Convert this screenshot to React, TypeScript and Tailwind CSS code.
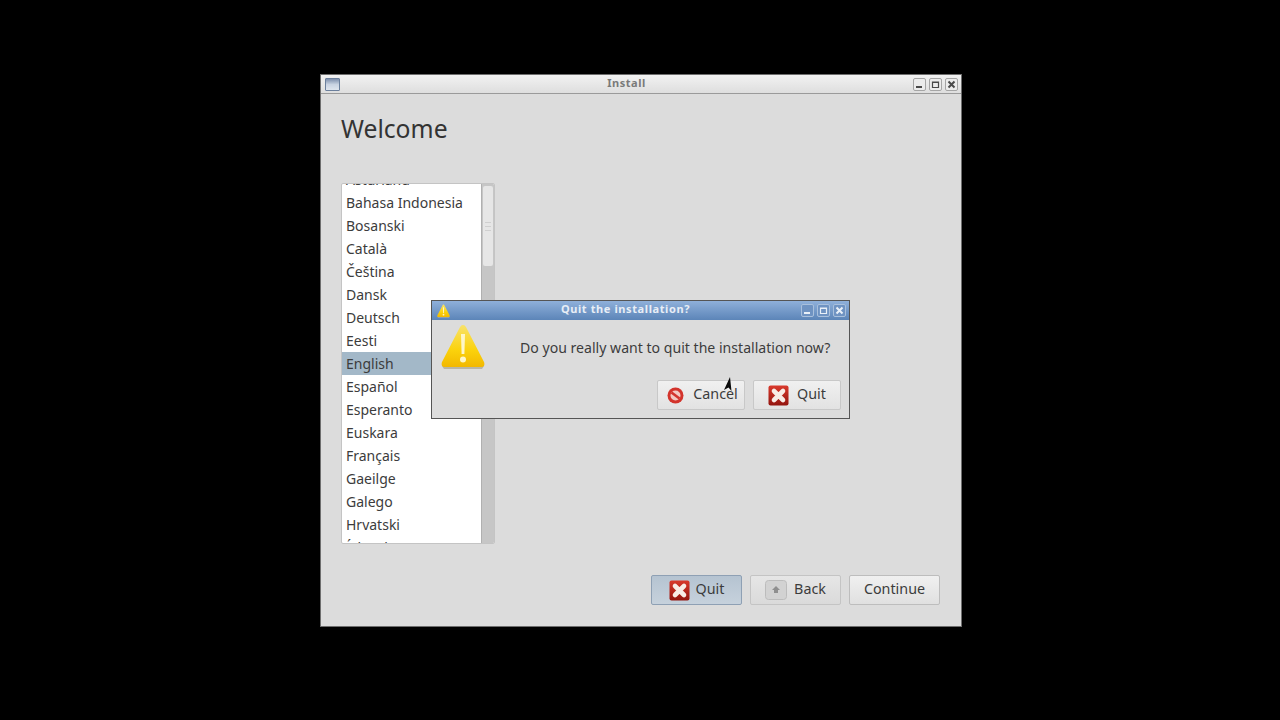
const languages = [
  'Asturianu',
  'Bahasa Indonesia',
  'Bosanski',
  'Català',
  'Čeština',
  'Dansk',
  'Deutsch',
  'Eesti',
  'English',
  'Español',
  'Esperanto',
  'Euskara',
  'Français',
  'Gaeilge',
  'Galego',
  'Hrvatski',
  'Íslenska',
];

function WarningIcon({ size }: { size: number }) {
  return (
    <svg width={size} height={Math.round((size * 46) / 44)} viewBox="0 0 44 46">
      <defs>
        <linearGradient id={`warn${size}`} x1="0" y1="0" x2="0" y2="1">
          <stop offset="0" stopColor="#f8e26a" />
          <stop offset="0.6" stopColor="#fbd20c" />
          <stop offset="1" stopColor="#f2b800" />
        </linearGradient>
      </defs>
      <path d="M3 45 L41 45 L43 42 L1 42 Z" fill="#b9b6a4" />
      <path d="M22 1 C24 1 25 3 26 5 L43 38 C44 41 43 43 40 43 L4 43 C1 43 0 41 1 38 L18 5 C19 3 20 1 22 1 Z" fill={`url(#warn${size})`} />
      <path d="M20 10 L24 10 L23.4 30 L20.6 30 Z" fill="#fdf6c8" />
      <circle cx="22" cy="35.5" r="3" fill="#fdf6c8" />
    </svg>
  );
}

function QuitIcon({ id }: { id: string }) {
  return (
    <svg width="21" height="21" viewBox="0 0 21 21">
      <defs>
        <linearGradient id={id} x1="0" y1="0" x2="0" y2="1">
          <stop offset="0" stopColor="#d9392c" />
          <stop offset="1" stopColor="#93150f" />
        </linearGradient>
      </defs>
      <rect x="0.5" y="0.5" width="20" height="20" rx="2" fill={`url(#${id})`} />
      <path d="M6 6 L15 15 M15 6 L6 15" stroke="#f8ece6" strokeWidth="4.6" strokeLinecap="round" />
    </svg>
  );
}

function CancelIcon() {
  return (
    <svg width="17" height="17" viewBox="0 0 17 17">
      <circle cx="8.5" cy="8.5" r="8" fill="#d3342c" />
      <circle cx="8.5" cy="8.5" r="5" fill="#f2c9c2" />
      <path d="M4.5 5.5 L12.5 11.5" stroke="#d3342c" strokeWidth="2.6" />
    </svg>
  );
}

function BackIcon() {
  return (
    <svg width="22" height="20" viewBox="0 0 22 20">
      <rect x="0.5" y="0.5" width="21" height="19" rx="3" fill="#d2d2d2" stroke="#bcbcbc" />
      <path d="M11 6 L15 10 L13 10 L13 13 L9 13 L9 10 L7 10 Z" fill="#8f8f8f" />
    </svg>
  );
}

function WinButton({ kind, blue }: { kind: 'min' | 'max' | 'close'; blue?: boolean }) {
  const stroke = blue ? '#e9f0f8' : '#4a4a4a';
  return (
    <div className={`flex h-[13px] w-[13px] items-center justify-center rounded-[2px] border ${blue ? 'border-[#a9c0dc] bg-[#6f93c2]' : 'border-[#a5a5a5] bg-[#ececec]'}`}>
      <svg width="9" height="9" viewBox="0 0 9 9">
        {kind === 'min' && <path d="M1 7 H7" stroke={stroke} strokeWidth="2" />}
        {kind === 'max' && <path d="M1.5 2 H7.5 V7.5 H1.5 Z M1.5 2.5 H7.5" stroke={stroke} strokeWidth="1.2" fill="none" />}
        {kind === 'close' && <path d="M1.5 1.5 L7.5 7.5 M7.5 1.5 L1.5 7.5" stroke={stroke} strokeWidth="2" />}
      </svg>
    </div>
  );
}

function Button({ children, className }: { children: React.ReactNode; className: string }) {
  return (
    <div className={`flex h-[30px] items-center justify-center rounded-[2px] border text-[14.3px] text-[#3c3c3c] ${className}`}>
      {children}
    </div>
  );
}

export default function App() {
  return (
    <div className="relative h-[720px] w-[1280px] overflow-hidden bg-black font-['Noto_Sans',sans-serif]">
      {/* main installer window */}
      <div className="absolute left-[320px] top-[74px] flex h-[553px] w-[642px] flex-col border border-[#6e6e6e] bg-[#dcdcdc]">
        <div className="relative flex h-[19px] shrink-0 items-center justify-between border-b border-[#9a9a9a] bg-gradient-to-b from-[#f2f2f2] to-[#dedede] pl-[4px] pr-[3px]">
          <div className="h-[13px] w-[15px] rounded-[1px] border border-[#6b7f9c] bg-gradient-to-b from-[#7f90ad] via-[#c9d3e2] to-[#dfe5ee]" />
          <span className="pb-[2px] text-[11px] font-bold tracking-[0.5px] text-[#7a7a7a]">Install</span>
          <div className="flex gap-[3px]">
            <WinButton kind="min" />
            <WinButton kind="max" />
            <WinButton kind="close" />
          </div>
        </div>

        <div className="flex flex-1 flex-col px-[20px]">
          <h1 className="mt-[17px] h-[36px] text-[24.7px] leading-[36px] text-[#333333]">Welcome</h1>

          <div className="mt-[36px] flex h-[361px] w-[154px] overflow-hidden rounded-[2px] border border-[#c4c4c4] bg-white">
            <div className="flex-1 overflow-hidden">
              <div className="mt-[-16px]">
                {languages.map((lang) => (
                  <div
                    key={lang}
                    className={`h-[23px] pl-[4px] text-[14px] leading-[23px] text-[#3c3c3c] ${lang === 'English' ? 'bg-[#a3b8c8]' : ''}`}
                  >
                    {lang}
                  </div>
                ))}
              </div>
            </div>
            <div className="w-[13px] shrink-0 border-l border-[#b0b0b0] bg-[#c6c6c6] px-[1px] pt-[2px]">
              <div className="flex h-[80px] flex-col items-center justify-center gap-[3px] rounded-[2px] bg-[#e6e6e6]">
                <div className="h-px w-[6px] bg-[#cfcfcf]" />
                <div className="h-px w-[6px] bg-[#cfcfcf]" />
                <div className="h-px w-[6px] bg-[#cfcfcf]" />
              </div>
            </div>
          </div>

          <div className="mr-[1px] mt-[31px] flex justify-end gap-[8px]">
            <Button className="w-[91px] gap-[6px] border-[#8ea0b4] bg-gradient-to-b from-[#b5c3d1] to-[#c6d1dc]">
              <QuitIcon id="quitMain" />
              <span className="pb-[2px]">Quit</span>
            </Button>
            <Button className="w-[91px] gap-[7px] border-[#c4c4c4] bg-gradient-to-b from-[#e6e6e6] to-[#dadada]">
              <BackIcon />
              <span className="pb-[2px]">Back</span>
            </Button>
            <Button className="w-[91px] border-[#bdbdbd] bg-gradient-to-b from-[#f0f0f0] to-[#e0e0e0]">
              <span className="pb-[2px]">Continue</span>
            </Button>
          </div>
        </div>
      </div>

      {/* quit confirmation dialog */}
      <div className="absolute left-[431px] top-[300px] flex h-[119px] w-[419px] flex-col border border-[#555555] bg-[#dcdcdc]">
        <div className="flex h-[19px] shrink-0 items-center justify-between bg-gradient-to-b from-[#8fb0da] to-[#5c85b8] pl-[5px] pr-[3px]">
          <WarningIcon size={13} />
          <span className="pb-[2px] text-[11px] font-bold tracking-[0.6px] text-[#e8eef6]">Quit the installation?</span>
          <div className="flex gap-[3px]">
            <WinButton kind="min" blue />
            <WinButton kind="max" blue />
            <WinButton kind="close" blue />
          </div>
        </div>
        <div className="flex flex-1 flex-col pl-[9px] pr-[8px]">
          <div className="flex items-start">
            <div className="mt-[4px]">
              <WarningIcon size={44} />
            </div>
            <p className="ml-[35px] mt-[18px] text-[14.1px] leading-[20px] text-[#3c3c3c]">
              Do you really want to quit the installation now?
            </p>
          </div>
          <div className="mt-[10px] flex justify-end gap-[8px]">
            <Button className="w-[88px] gap-[9px] border-[#c8c8c8] bg-gradient-to-b from-[#f0f0f0] to-[#e2e2e2] pl-[3px]">
              <CancelIcon />
              <span className="pb-[2px]">Cancel</span>
            </Button>
            <Button className="w-[88px] gap-[8px] border-[#c8c8c8] bg-gradient-to-b from-[#f0f0f0] to-[#e2e2e2]">
              <QuitIcon id="quitDialog" />
              <span className="pb-[2px]">Quit</span>
            </Button>
          </div>
        </div>
      </div>

      {/* mouse pointer */}
      <svg className="absolute left-[722px] top-[376px]" width="12" height="18" viewBox="0 0 12 18">
        <path d="M8 1 L9.5 15 L6.5 11.5 L2 14 Z" fill="#0a0a0a" />
      </svg>
    </div>
  );
}
